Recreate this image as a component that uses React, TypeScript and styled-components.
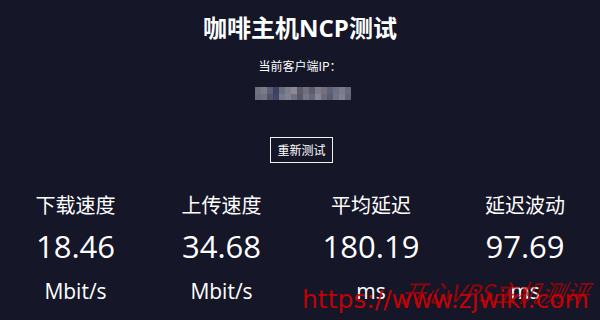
import React from "react";
import styled, { createGlobalStyle } from "styled-components";

const Global = createGlobalStyle`
  html, body { margin: 0; padding: 0; background: #151628; }
  body { font-family: "Open Sans", "Noto Sans CJK SC", sans-serif; color: #fff; }
`;

const Page = styled.div`
  position: relative;
  width: 600px;
  height: 320px;
  overflow: hidden;
  background: #151628;
  display: flex;
  flex-direction: column;
  align-items: center;
`;

const Title = styled.h1`
  margin: 13px 0 0;
  font-size: 24px;
  line-height: 30px;
  font-weight: 700;
  font-family: "Open Sans", "Noto Sans CJK SC", sans-serif;
`;

const IpLabel = styled.div`
  margin-top: 15px;
  font-size: 12px;
  line-height: 16px;
  font-family: "Noto Sans CJK SC", sans-serif;
`;

const Mosaic = styled.svg`
  margin: 13px 0 0 6px;
  display: block;
`;

const RetestButton = styled.button`
  margin-top: 37px;
  background: transparent;
  border: 1px solid #f2f2f2;
  color: #fff;
  font-family: "Noto Sans CJK SC", sans-serif;
  font-size: 12px;
  line-height: 16px;
  padding: 4px 6px;
  height: 26px;
  box-sizing: border-box;
  cursor: pointer;
  margin-left: 3px;
`;

const Stats = styled.div`
  margin-top: 28px;
  width: 600px;
  display: grid;
  grid-template-columns: 151px 141px 158px 150px;
`;

const Stat = styled.div`
  display: flex;
  flex-direction: column;
  align-items: center;
`;

const StatLabel = styled.div`
  font-family: "Noto Sans CJK SC", sans-serif;
  font-size: 20px;
  line-height: 28px;
`;

const StatValue = styled.div`
  margin-top: 7px;
  font-family: "Open Sans", sans-serif;
  font-size: 31px;
  line-height: 40px;
`;

const StatUnit = styled.div`
  margin-top: 11px;
  font-family: "Open Sans", sans-serif;
  font-size: 21px;
  line-height: 28px;
`;

const WatermarkUrl = styled.div`
  position: absolute;
  left: 302px;
  top: 285px;
  font-family: "DejaVu Sans", sans-serif;
  font-size: 25px;
  line-height: 30px;
  color: rgba(215, 0, 0, 0.9);
  white-space: nowrap;
`;

const WatermarkName = styled.div`
  position: absolute;
  left: 402px;
  top: 277px;
  font-family: "Noto Sans CJK SC", sans-serif;
  font-style: italic;
  font-size: 24px;
  line-height: 30px;
  color: rgba(190, 0, 0, 0.72);
  transform: skewX(-12deg);
  white-space: nowrap;
`;

const mosaicColors = [
  "#6e6f80", "#7a7a88", "#5c5e75", "#3e4262", "#6a6c80", "#7c7e8c",
  "#8a8896", "#5e5a6c", "#706e7e", "#5a5c70", "#7e7a86", "#74707e",
  "#606274", "#6c7086", "#7a7c8c", "#686a7e",
];
const mosaicColors2 = [
  "#6a6b7c", "#6f7080", "#50526c", "#414566", "#767890", "#808290",
  "#707080", "#5a566a", "#787684", "#66687a", "#888594", "#6e6a78",
  "#5a5c6e", "#707488", "#808292", "#646678",
];

const stats = [
  { label: "下载速度", value: "18.46", unit: "Mbit/s" },
  { label: "上传速度", value: "34.68", unit: "Mbit/s" },
  { label: "平均延迟", value: "180.19", unit: "ms" },
  { label: "延迟波动", value: "97.69", unit: "ms" },
];

export default function App() {
  return (
    <>
      <Global />
      <Page>
        <Title>咖啡主机NCP测试</Title>
        <IpLabel>当前客户端IP：</IpLabel>
        <Mosaic width="96" height="13" viewBox="0 0 96 13">
          {mosaicColors.map((c, i) => (
            <rect key={"a" + i} x={i * 6} y={0} width={6} height={7} fill={c} />
          ))}
          {mosaicColors2.map((c, i) => (
            <rect key={"b" + i} x={i * 6} y={7} width={6} height={6} fill={c} />
          ))}
        </Mosaic>
        <RetestButton>重新测试</RetestButton>
        <Stats>
          {stats.map((s) => (
            <Stat key={s.label}>
              <StatLabel>{s.label}</StatLabel>
              <StatValue>{s.value}</StatValue>
              <StatUnit>{s.unit}</StatUnit>
            </Stat>
          ))}
        </Stats>
        <WatermarkName>开心VPS主机测评</WatermarkName>
        <WatermarkUrl>https://www.zjwiki.com</WatermarkUrl>
      </Page>
    </>
  );
}
